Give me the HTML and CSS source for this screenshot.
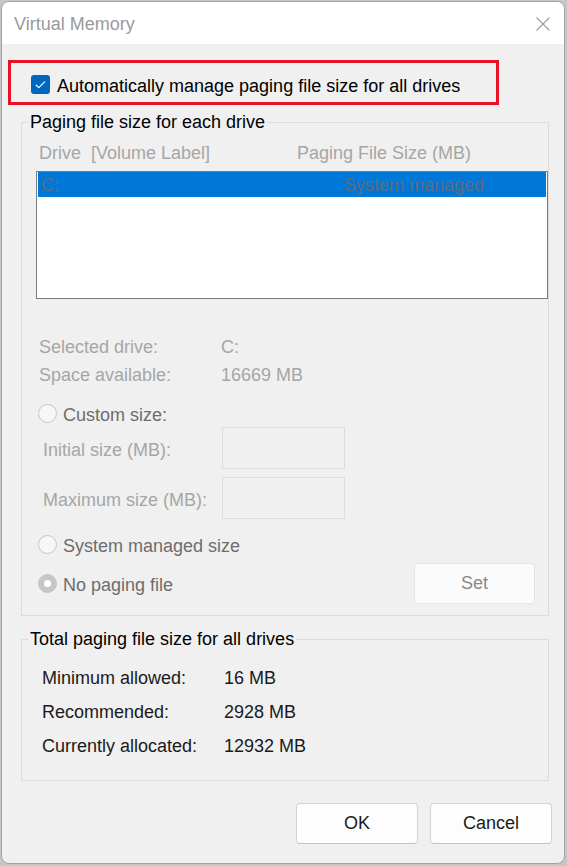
FILE: index.html
```html
<!DOCTYPE html>
<html lang="en">
<head>
<meta charset="utf-8">
<title>Virtual Memory</title>
<link rel="stylesheet" href="styles.css">
</head>
<body>
<div class="window">
  <div class="titlebar">
    <span class="title">Virtual Memory</span>
    <svg class="close" width="14" height="14" viewBox="0 0 14 14" aria-hidden="true">
      <path d="M0.5 0.5 L13.5 13.5 M13.5 0.5 L0.5 13.5" stroke="#9a9a9a" stroke-width="1.1" fill="none"/>
    </svg>
  </div>

  <div class="highlight">
    <span class="checkbox">
      <svg width="19" height="19" viewBox="0 0 19 19" aria-hidden="true">
        <path d="M5.2 10.2 L7.8 12.6 L13.6 6.8" stroke="#ffffff" stroke-width="1.2" fill="none" stroke-linecap="round" stroke-linejoin="round"/>
      </svg>
    </span>
    <span class="check-label">Automatically manage paging file size for all drives</span>
  </div>

  <fieldset class="group group-drives">
    <legend>Paging file size for each drive</legend>
    <div class="list-head">
      <span class="head-drive">Drive&nbsp; [Volume Label]</span>
      <span>Paging File Size (MB)</span>
    </div>
    <div class="listbox">
      <div class="list-row">
        <span class="row-drive">C:</span>
        <span>System managed</span>
      </div>
    </div>
    <div class="info-grid">
      <span>Selected drive:</span><span>C:</span>
      <span>Space available:</span><span>16669 MB</span>
    </div>
    <div class="radio-row r-custom">
      <span class="radio"></span><span class="radio-label">Custom size:</span>
    </div>
    <div class="field-row f-initial">
      <span class="field-label">Initial size (MB):</span><span class="textbox"></span>
    </div>
    <div class="field-row f-max">
      <span class="field-label">Maximum size (MB):</span><span class="textbox"></span>
    </div>
    <div class="radio-row r-system">
      <span class="radio"></span><span class="radio-label">System managed size</span>
    </div>
    <div class="last-row">
      <div class="radio-row">
        <span class="radio on"></span><span class="radio-label">No paging file</span>
      </div>
      <button class="btn-set" type="button">Set</button>
    </div>
  </fieldset>

  <fieldset class="group group-total">
    <legend>Total paging file size for all drives</legend>
    <div class="total-grid">
      <span>Minimum allowed:</span><span>16 MB</span>
      <span>Recommended:</span><span>2928 MB</span>
      <span>Currently allocated:</span><span>12932 MB</span>
    </div>
  </fieldset>

  <div class="buttons">
    <button class="btn" type="button">OK</button>
    <button class="btn" type="button">Cancel</button>
  </div>
</div>
</body>
</html>
```

FILE: styles.css
```css
html, body {
  margin: 0;
}

body {
  padding: 1px;
  background: #c6c6c6;
  font-family: "Liberation Sans", Arial, sans-serif;
  font-size: 18px;
  color: #000;
}

.window {
  width: 562px;
  height: 861px;
  border: 1px solid #a2a2a2;
  border-radius: 8px;
  background: #f0f0f0;
  overflow: hidden;
}

/* Title bar */
.titlebar {
  height: 42px;
  background: #ffffff;
  display: flex;
  align-items: center;
  padding-left: 12px;
}

.title {
  color: #9a9a9a;
  line-height: 20px;
  padding-top: 2px;
}

.close {
  margin-left: auto;
  margin-right: 14px;
  margin-top: 2px;
  display: block;
}

/* Highlighted checkbox row */
.highlight {
  margin: 16px 0 0 6px;
  width: 491px;
  height: 45px;
  box-sizing: border-box;
  border: 3px solid #e81224;
  display: flex;
  align-items: center;
  padding: 3px 0 0 20px;
}

.checkbox {
  width: 19px;
  height: 19px;
  border-radius: 3px;
  background: #0067c0;
  display: block;
  flex: none;
}

.checkbox svg {
  display: block;
}

.check-label {
  margin-left: 7px;
  line-height: 20px;
  padding-top: 3px;
}

/* Group boxes */
.group {
  margin: 7px 0 0 19px;
  width: 528px;
  box-sizing: border-box;
  border: 1px solid #dcdcdc;
  padding: 0;
  min-width: 0;
}

.group legend {
  margin-left: 6px;
  padding: 0 2px;
  line-height: 20px;
}

.list-head {
  margin-top: 11px;
  padding-left: 17px;
  display: flex;
  line-height: 20px;
  color: #a6a6a6;
}

.head-drive {
  width: 258px;
}

.listbox {
  margin: 8px 0 0 14px;
  width: 512px;
  height: 128px;
  box-sizing: border-box;
  border: 1px solid #7a7a7a;
  background: #ffffff;
  padding: 0 1px;
}

.list-row {
  height: 25px;
  box-sizing: border-box;
  background: #0078d7;
  color: #5f6b78;
  display: flex;
  line-height: 23px;
  padding: 2px 0 0 3px;
}

.row-drive {
  width: 303px;
}

.info-grid {
  margin-top: 34px;
  padding-left: 17px;
  display: grid;
  grid-template-columns: 182px auto;
  line-height: 28px;
  color: #a6a6a6;
}

.radio-row {
  display: flex;
  align-items: center;
  padding-left: 16px;
  color: #6d6d6d;
}

.r-custom {
  margin-top: 13px;
}

.r-system {
  margin-top: 14px;
}

.radio {
  width: 19px;
  height: 19px;
  box-sizing: border-box;
  border: 1px solid #c6c6c6;
  border-radius: 50%;
  background: #f7f7f7;
  flex: none;
  display: flex;
  align-items: center;
  justify-content: center;
}

.radio.on {
  background: #c6c6c6;
}

.radio.on::after {
  content: "";
  width: 7px;
  height: 7px;
  border-radius: 50%;
  background: #ffffff;
}

.radio-label {
  margin-left: 6px;
  line-height: 20px;
  padding-top: 3px;
}

.field-row {
  display: flex;
  align-items: center;
  padding-left: 21px;
  color: #a6a6a6;
}

.f-initial {
  margin-top: 2px;
}

.f-max {
  margin-top: 8px;
}

.field-label {
  width: 179px;
  line-height: 20px;
  padding-top: 3px;
}

.textbox {
  width: 123px;
  height: 42px;
  box-sizing: border-box;
  border: 1px solid #dcdcdc;
  background: #f0f0f0;
}

.last-row {
  margin-top: 7px;
  display: flex;
  align-items: center;
  justify-content: space-between;
  padding-right: 13px;
  margin-bottom: 11px;
}

.btn-set {
  width: 121px;
  height: 41px;
  box-sizing: border-box;
  border: 1px solid #e5e5e5;
  border-radius: 4px;
  background: #fbfbfb;
  color: #8a8a8a;
  font: inherit;
  padding: 0;
}

.group-total {
  margin-top: 13px;
}

.total-grid {
  margin-top: 12px;
  margin-bottom: 17px;
  padding-left: 20px;
  display: grid;
  grid-template-columns: 182px auto;
  line-height: 34px;
  color: #1a1a1a;
}

/* Dialog buttons */
.buttons {
  margin-top: 22px;
  display: flex;
  justify-content: flex-end;
  gap: 12px;
  padding-right: 12px;
}

.btn {
  width: 122px;
  height: 41px;
  box-sizing: border-box;
  border: 1px solid #d3d3d3;
  border-bottom-color: #c2c2c2;
  border-radius: 4px;
  background: #fdfdfd;
  color: #1a1a1a;
  font: inherit;
  padding: 0;
}
```
